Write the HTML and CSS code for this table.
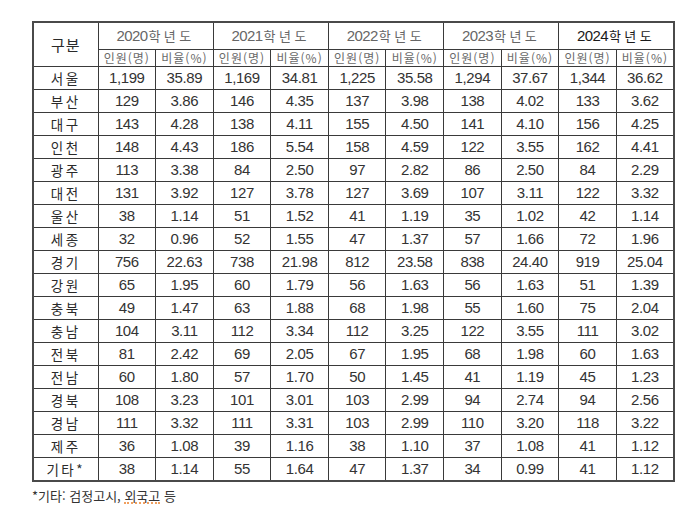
FILE: index.html
```html
<!DOCTYPE html>
<html lang="ko">
<head>
<meta charset="utf-8">
<link rel="stylesheet" href="styles.css">
</head>
<body>
<div class="page">
  <table class="stats">
    <colgroup>
      <col class="c-label">
      <col class="c-num"><col class="c-num"><col class="c-num"><col class="c-num"><col class="c-num">
      <col class="c-num"><col class="c-num"><col class="c-num"><col class="c-num"><col class="c-num">
    </colgroup>
    <thead>
      <tr class="h1">
        <th rowspan="2" class="gubun">구분</th>
        <th colspan="2" class="year"><span class="yr">2020</span><span class="hak">학년도</span></th>
        <th colspan="2" class="year"><span class="yr">2021</span><span class="hak">학년도</span></th>
        <th colspan="2" class="year"><span class="yr">2022</span><span class="hak">학년도</span></th>
        <th colspan="2" class="year"><span class="yr">2023</span><span class="hak">학년도</span></th>
        <th colspan="2" class="year year-now"><span class="yr">2024</span><span class="hak">학년도</span></th>
      </tr>
      <tr class="h2">
        <th class="sub">인원(명)</th><th class="sub">비율(%)</th>
        <th class="sub">인원(명)</th><th class="sub">비율(%)</th>
        <th class="sub">인원(명)</th><th class="sub">비율(%)</th>
        <th class="sub">인원(명)</th><th class="sub">비율(%)</th>
        <th class="sub">인원(명)</th><th class="sub">비율(%)</th>
      </tr>
    </thead>
    <tbody>
      <tr><th>서울</th><td>1,199</td><td>35.89</td><td>1,169</td><td>34.81</td><td>1,225</td><td>35.58</td><td>1,294</td><td>37.67</td><td>1,344</td><td>36.62</td></tr>
      <tr><th>부산</th><td>129</td><td>3.86</td><td>146</td><td>4.35</td><td>137</td><td>3.98</td><td>138</td><td>4.02</td><td>133</td><td>3.62</td></tr>
      <tr><th>대구</th><td>143</td><td>4.28</td><td>138</td><td>4.11</td><td>155</td><td>4.50</td><td>141</td><td>4.10</td><td>156</td><td>4.25</td></tr>
      <tr><th>인천</th><td>148</td><td>4.43</td><td>186</td><td>5.54</td><td>158</td><td>4.59</td><td>122</td><td>3.55</td><td>162</td><td>4.41</td></tr>
      <tr><th>광주</th><td>113</td><td>3.38</td><td>84</td><td>2.50</td><td>97</td><td>2.82</td><td>86</td><td>2.50</td><td>84</td><td>2.29</td></tr>
      <tr><th>대전</th><td>131</td><td>3.92</td><td>127</td><td>3.78</td><td>127</td><td>3.69</td><td>107</td><td>3.11</td><td>122</td><td>3.32</td></tr>
      <tr><th>울산</th><td>38</td><td>1.14</td><td>51</td><td>1.52</td><td>41</td><td>1.19</td><td>35</td><td>1.02</td><td>42</td><td>1.14</td></tr>
      <tr><th>세종</th><td>32</td><td>0.96</td><td>52</td><td>1.55</td><td>47</td><td>1.37</td><td>57</td><td>1.66</td><td>72</td><td>1.96</td></tr>
      <tr><th>경기</th><td>756</td><td>22.63</td><td>738</td><td>21.98</td><td>812</td><td>23.58</td><td>838</td><td>24.40</td><td>919</td><td>25.04</td></tr>
      <tr><th>강원</th><td>65</td><td>1.95</td><td>60</td><td>1.79</td><td>56</td><td>1.63</td><td>56</td><td>1.63</td><td>51</td><td>1.39</td></tr>
      <tr><th>충북</th><td>49</td><td>1.47</td><td>63</td><td>1.88</td><td>68</td><td>1.98</td><td>55</td><td>1.60</td><td>75</td><td>2.04</td></tr>
      <tr><th>충남</th><td>104</td><td>3.11</td><td>112</td><td>3.34</td><td>112</td><td>3.25</td><td>122</td><td>3.55</td><td>111</td><td>3.02</td></tr>
      <tr><th>전북</th><td>81</td><td>2.42</td><td>69</td><td>2.05</td><td>67</td><td>1.95</td><td>68</td><td>1.98</td><td>60</td><td>1.63</td></tr>
      <tr><th>전남</th><td>60</td><td>1.80</td><td>57</td><td>1.70</td><td>50</td><td>1.45</td><td>41</td><td>1.19</td><td>45</td><td>1.23</td></tr>
      <tr><th>경북</th><td>108</td><td>3.23</td><td>101</td><td>3.01</td><td>103</td><td>2.99</td><td>94</td><td>2.74</td><td>94</td><td>2.56</td></tr>
      <tr><th>경남</th><td>111</td><td>3.32</td><td>111</td><td>3.31</td><td>103</td><td>2.99</td><td>110</td><td>3.20</td><td>118</td><td>3.22</td></tr>
      <tr><th>제주</th><td>36</td><td>1.08</td><td>39</td><td>1.16</td><td>38</td><td>1.10</td><td>37</td><td>1.08</td><td>41</td><td>1.12</td></tr>
      <tr><th>기타*</th><td>38</td><td>1.14</td><td>55</td><td>1.64</td><td>47</td><td>1.37</td><td>34</td><td>0.99</td><td>41</td><td>1.12</td></tr>
    </tbody>
  </table>
  <p class="note">*기타: 검정고시, <span class="spell">외국고</span> 등</p>
</div>
</body>
</html>
```

FILE: styles.css
```css
html, body {
  margin: 0;
  padding: 0;
  background: #ffffff;
}

.page {
  padding: 21px 0 0 32px;
  font-family: "Liberation Sans", "Noto Sans CJK KR", sans-serif;
  color: #333;
}

.stats {
  border-collapse: collapse;
  table-layout: fixed;
  width: 641px;
  border: 2px solid #4a4a4a;
}

.c-label { width: 65px; }
.c-num { width: 57.6px; }

.stats th,
.stats td {
  border: 1px solid #3a3a3a;
  padding: 0;
  text-align: center;
  vertical-align: middle;
  white-space: nowrap;
  overflow: hidden;
}

.stats td {
  font-size: 15px;
  letter-spacing: -0.4px;
  color: #333;
  height: 22px;
  line-height: 16px;
}

.stats tbody th {
  font-family: "Noto Sans CJK KR", sans-serif;
  font-weight: 400;
  font-size: 13.5px;
  letter-spacing: 2.5px;
  color: #2a2a2a;
  height: 22px;
  line-height: 16px;
}

.h1 th { height: 26px; }
.h2 th { height: 16px; }

.gubun {
  font-family: "Noto Sans CJK KR", sans-serif;
  font-weight: 400;
  font-size: 15px;
  letter-spacing: 1px;
  color: #2a2a2a;
}

.year {
  font-weight: 400;
  color: #666;
  line-height: 18px;
}

.yr {
  font-family: "Liberation Sans", sans-serif;
  font-size: 15px;
  letter-spacing: -0.6px;
}

.hak {
  font-family: "Noto Sans CJK KR", sans-serif;
  font-size: 13px;
  letter-spacing: 3.5px;
  margin-left: 1px;
}

.year-now { color: #1a1a1a; }

.sub {
  font-family: "Noto Sans CJK KR", sans-serif;
  font-weight: 400;
  font-size: 12px;
  letter-spacing: 1px;
  color: #6a6a6a;
  line-height: 14px;
}

.note {
  margin: 6px 0 0 0;
  font-family: "Noto Sans CJK KR", sans-serif;
  font-size: 13px;
  color: #333;
  line-height: 15px;
}

.spell {
  display: inline-block;
  line-height: 13px;
  border-bottom: 2px dotted #f0a060;
}
```
